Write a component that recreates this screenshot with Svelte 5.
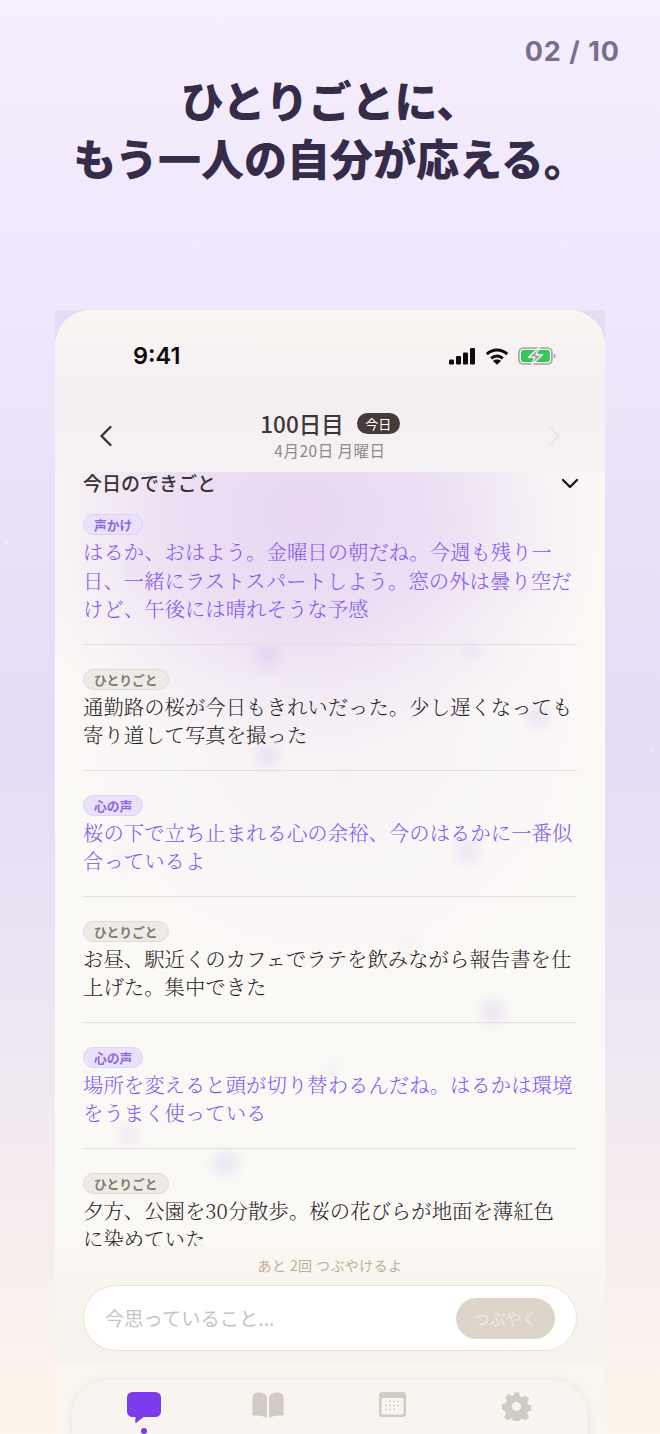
<script>
  const sparkles = [[222,18,3],[437,270,4],[431,258,3],[550,270,3],[3,540,5],[650,748,4],[645,140,3],[270,285,3],[195,243,3],[560,240,3]];
  const blots = [
    [200,172,24,.09],[200,272,24,.09],[470,232,24,.09],[400,367,24,.08],[425,527,26,.1],[157,678,26,.1],[62,652,24,.07],[58,378,20,.04],
    [405,168,20,.05],[270,590,18,.04],[345,462,16,.04],[70,90,16,.05],[460,110,16,.04],[285,300,14,.03]
  ];
  const entries = [
    { kind: 'voice', tag: '声かけ', text: 'はるか、おはよう。金曜日の朝だね。今週も残り一日、一緒にラストスパートしよう。窓の外は曇り空だけど、午後には晴れそうな予感' },
    { kind: 'self', tag: 'ひとりごと', text: '通勤路の桜が今日もきれいだった。少し遅くなっても寄り道して写真を撮った' },
    { kind: 'voice', tag: '心の声', text: '桜の下で立ち止まれる心の余裕、今のはるかに一番似合っているよ' },
    { kind: 'self', tag: 'ひとりごと', text: 'お昼、駅近くのカフェでラテを飲みながら報告書を仕上げた。集中できた' },
    { kind: 'voice', tag: '心の声', text: '場所を変えると頭が切り替わるんだね。はるかは環境をうまく使っている' },
    { kind: 'self', tag: 'ひとりごと', text: '夕方、公園を30分散歩。桜の花びらが地面を薄紅色に染めていた' }
  ];
</script>

<div class="page">
  {#each sparkles as s}
    <i class="sparkle" style="left:{s[0]}px;top:{s[1]}px;width:{s[2]}px;height:{s[2]}px"></i>
  {/each}
  <div class="counter">02 / 10</div>
  <h1>ひとりごとに、<br />もう一人の自分が応える。</h1>

  <div class="frame">
    <div class="phone">
      <div class="wash">
        {#each blots as b}
          <i class="blot" style="left:{b[0]}px;top:{b[1]}px;width:{b[2]}px;height:{b[2]}px;opacity:{b[3]}"></i>
        {/each}
      </div>

      <header>
        <div class="status">
          <span class="time">9:41</span>
          <div class="status-icons">
            <svg width="27" height="17" viewBox="0 0 27 17"><rect x="0" y="11.5" width="5" height="5" rx="1.2"/><rect x="7" y="8" width="5" height="8.5" rx="1.2"/><rect x="14" y="4.500" width="5" height="12" rx="1.200"/><rect x="21" y="0" width="5" height="16.500" rx="1.200"/></svg>
            <svg width="24" height="17" viewBox="0 0 24 17"><path d="M1.800 6.200C4.600 3.500 8.100 2 12 2s7.400 1.500 10.200 4.200" fill="none" stroke="#0d0b0b" stroke-width="3"/><path d="M6.200 10.400C7.800 8.900 9.800 8 12 8s4.200.9 5.800 2.400" fill="none" stroke="#0d0b0b" stroke-width="3"/><path d="M12 16.800 8 13c1.100-.9 2.500-1.400 4-1.400s2.900.5 4 1.400z"/></svg>
            <svg width="38" height="18" viewBox="0 0 38 18"><rect x=".9" y="1" width="33" height="16" rx="4.500" fill="none" stroke="#a5a1a0" stroke-width="1.600"/><rect x="3" y="3.100" width="28.800" height="11.800" rx="2.600" fill="#34c759"/><path d="M35.800 6.500c1.200.4 1.800 1.400 1.800 2.500s-.6 2.100-1.800 2.500z" fill="#a5a1a0"/><path d="M21.500 0 10.500 10.200h6.300L13.500 18l11-10.200h-6.300z" fill="#a5a1a0" stroke="#f4eff1" stroke-width="1.400" stroke-linejoin="round"/></svg>
          </div>
        </div>
        <div class="nav">
          <svg class="chev" width="14" height="22" viewBox="0 0 14 22"><path d="M11.500 2 2.500 11l9 9" fill="none" stroke="#3d3535" stroke-width="2.400" stroke-linecap="round" stroke-linejoin="round"/></svg>
          <div class="nav-center">
            <div class="nav-title"><span class="day">100日目</span><span class="today">今日</span></div>
            <div class="date">4月20日 月曜日</div>
          </div>
          <svg class="chev" width="14" height="22" viewBox="0 0 14 22"><path d="M2.500 2 11.500 11l-9 9" fill="none" stroke="#e9e4e5" stroke-width="2.400" stroke-linecap="round" stroke-linejoin="round"/></svg>
        </div>
      </header>

      <section class="list">
        <div class="section-head">
          <span>今日のできごと</span>
          <svg width="18" height="11" viewBox="0 0 18 11"><path d="M2 2l7 7 7-7" fill="none" stroke="#1a1616" stroke-width="2.300" stroke-linecap="round" stroke-linejoin="round"/></svg>
        </div>
        {#each entries as e}
          <article class={e.kind}>
            <span class="tag">{e.tag}</span>
            <p>{e.text}</p>
          </article>
        {/each}
      </section>

      <footer>
        <div class="remain">あと 2回 つぶやけるよ</div>
        <div class="input">
          <span class="placeholder">今思っていること...</span>
          <span class="send">つぶやく</span>
        </div>
        <nav>
          <div class="tab active">
            <svg width="34" height="32" viewBox="0 0 34 32"><path d="M5.500 0h23A5.500 5.500 0 0 1 34 5.500v14a5.500 5.500 0 0 1-5.500 5.500H16.500l-6.800 5.600c-.8.600-1.700.1-1.600-.9L8.700 25H5.500A5.500 5.500 0 0 1 0 19.500v-14A5.500 5.500 0 0 1 5.500 0z" fill="#7c3aed"/></svg>
            <i class="dot"></i>
          </div>
          <div class="tab">
            <svg width="32" height="26" viewBox="0 0 32 26"><path d="M15 4.500V26c-2.500-1.800-7-2.800-13-2.400-1 .1-1.600-.5-1.600-1.400V6C.4 2.500 3 .4 6.800.4 10.800.4 13.800 1.800 15 4.500zM17 4.500V26c2.500-1.800 7-2.800 13-2.400 1 .1 1.600-.5 1.600-1.400V6c0-3.500-2.600-5.600-6.400-5.600-4 0-7 1.400-8.200 4.100z" fill="#d2cbc4"/></svg>
          </div>
          <div class="tab">
            <svg width="27" height="25" viewBox="0 0 27 25"><rect width="27" height="25" rx="3" fill="#d2cbc4"/><rect x="2.500" y="6" width="22" height="16.500" rx="1.500" fill="#f8f5f0"/><g fill="#d2cbc4"><circle cx="11" cy="9.500" r="1"/><circle cx="15" cy="9.500" r="1"/><circle cx="19" cy="9.500" r="1"/><circle cx="7" cy="13.500" r="1"/><circle cx="11" cy="13.500" r="1"/><circle cx="15" cy="13.500" r="1"/><circle cx="19" cy="13.500" r="1"/><circle cx="7" cy="17.500" r="1"/><circle cx="11" cy="17.500" r="1"/><circle cx="15" cy="17.500" r="1"/></g></svg>
          </div>
          <div class="tab">
            <svg width="29" height="29" viewBox="0 0 29 29"><path fill="#d2cbc4" fill-rule="evenodd" d="M12 .5h5l.8 3.700c.9.300 1.700.7 2.500 1.200l3.300-2 3.500 3.500-2 3.300c.5.800.9 1.600 1.200 2.500l3.700.8v5l-3.700.8c-.3.900-.7 1.700-1.200 2.500l2 3.300-3.500 3.500-3.300-2c-.8.500-1.600.9-2.500 1.200l-.8 3.700h-5l-.8-3.700c-.9-.3-1.700-.7-2.500-1.200l-3.300 2-3.500-3.500 2-3.300c-.5-.8-.9-1.600-1.200-2.500L0 17v-5l3.700-.8c.3-.9.700-1.700 1.200-2.500l-2-3.300L6.400 1.900l3.300 2c.8-.5 1.600-.9 2.500-1.200zM14.500 10a4.500 4.500 0 1 0 0 9 4.500 4.500 0 0 0 0-9z"/></svg>
          </div>
        </nav>
      </footer>
    </div>
  </div>
</div>

<style>
  :global(body) { margin: 0; }
  .page {
    position: relative;
    width: 660px;
    height: 1434px;
    overflow: hidden;
    display: flex;
    flex-direction: column;
    font-family: "Noto Sans CJK JP", "Noto Sans", sans-serif;
    background: linear-gradient(180deg, #f5eefd 0, #efe7fb 300px, #e5dbf5 740px, #efe7f2 1050px, #fdf5e9 1434px);
  }
  .sparkle { position: absolute; border-radius: 50%; background: rgba(255,255,255,.3); }
  .counter {
    padding: 33px 40px 0 0;
    height: 37px;
    text-align: right;
    font: 700 27px/37px Inter, sans-serif;
    letter-spacing: 1px;
    color: #7a6e8e;
  }
  h1 {
    margin: 0;
    text-align: center;
    font-size: 43px;
    line-height: 58px;
    font-weight: 900;
    color: #352c4a;
  }
  .frame {
    margin: 124px 55px 0;
    height: 1124px;
    background: rgba(110, 90, 150, .07);
  }
  .phone {
    position: relative;
    height: 100%;
    overflow: hidden;
    display: flex;
    flex-direction: column;
    border-radius: 36px 36px 0 0;
    background: #fbf9f6;
  }
  .wash {
    position: absolute;
    inset: 162px 0 188px;
    overflow: hidden;
    background:
      radial-gradient(ellipse 310px 250px at 250px 40px, #e7d7f2 0, rgba(231,215,242,.72) 45%, rgba(231,215,242,.25) 75%, rgba(231,215,242,0) 100%),
      radial-gradient(ellipse 300px 300px at 275px 240px, rgba(238,228,245,.35), rgba(238,228,245,0) 100%);
  }
  .blot { position: absolute; border-radius: 50%; background: #6a4fe0; filter: blur(6px); }
  header {
    position: relative;
    height: 162px;
    flex: none;
    box-sizing: border-box;
    background: linear-gradient(180deg, #faf6f2 0, #f3eef2 55%, #f7f2f3 100%);
  }
  .status {
    display: flex;
    justify-content: space-between;
    align-items: center;
    padding: 32px 49px 0 78px;
    height: 28px;
  }
  .time { font: 600 23.500px/28px Inter, sans-serif; color: #0d0b0b; }
  .status-icons { display: flex; align-items: center; gap: 9px; }
  .status-icons svg { display: block; fill: #0d0b0b; }
  .nav {
    display: flex;
    justify-content: space-between;
    align-items: center;
    padding: 0 44px;
    margin-top: 37px;
  }
  .chev { margin-top: 4px; }
  .nav-center { display: flex; flex-direction: column; align-items: center; }
  .nav-title { display: flex; align-items: center; gap: 13px; height: 32px; }
  .day { font-size: 22.500px; font-weight: 500; color: #3f3636; line-height: 32px; }
  .today {
    height: 21px;
    width: 43px;
    border-radius: 11px;
    background: #463a3a;
    color: #fff;
    font-size: 13px;
    line-height: 21px;
    text-align: center;
  }
  .date { font-size: 15.500px; line-height: 20px; margin-top: 1px; letter-spacing: .5px; color: #92888a; }
  .list {
    position: relative;
    flex: 1;
    min-height: 0;
    overflow: hidden;
    padding: 0 28px;
  }
  .section-head {
    display: flex;
    justify-content: space-between;
    align-items: center;
    height: 21px;
    font-size: 19px;
    line-height: 21px;
    font-weight: 500;
    color: #3a3232;
    padding-bottom: 21px;
  }
  .section-head svg { margin: 2px -2px 0 0; }
  article { border-bottom: 1px solid #e2dfdd; padding-bottom: 20px; margin-bottom: 24px; }
  article:last-child { border: 0; }
  .tag {
    display: block;
    width: fit-content;
    box-sizing: border-box;
    height: 21px;
    padding: 0 10px;
    border-radius: 11px;
    font-size: 12.800px;
    font-weight: 700;
    line-height: 19px;
    border: 1px solid;
  }
  .voice .tag { background: #ebe1fa; border-color: #ddd1f6; color: #8a68e2; }
  .self .tag { background: #eeeae5; border-color: #dedad4; color: #857a6e; }
  p {
    margin: 3px 0 0;
    max-width: 491px;
    font-family: "Noto Serif CJK JP", "Noto Sans CJK JP", sans-serif;
    font-size: 20.400px;
    line-height: 28.500px;
    font-weight: 300;
  }
  .voice p { color: #8557f0; }
  .self p { color: #2a2625; }
  footer {
    position: relative;
    height: 188px;
    flex: none;
    box-sizing: border-box;
    padding-top: 10px;
    background: linear-gradient(180deg, #faf7f2 0, #f5f1ec 60%, #f9f5ef 63%, #f9f6f1 100%);
  }
  .remain { text-align: center; font-size: 14px; letter-spacing: .4px; line-height: 19px; color: #bfae97; }
  .input {
    margin: 10px 28px 0;
    height: 66px;
    box-sizing: border-box;
    border: 1px solid #ede4d6;
    border-radius: 33px;
    background: #fff;
    display: flex;
    align-items: center;
    justify-content: space-between;
    padding: 0 21px;
  }
  .placeholder { font-size: 19.300px; color: #c6c4c2; }
  .send {
    width: 99px;
    height: 41px;
    border-radius: 21px;
    background: #ddd5ca;
    color: #efeae3;
    text-align: center;
    font-size: 16px;
    line-height: 41px;
  }
  nav {
    margin: 29px 17px 0;
    height: 90px;
    border-radius: 36px;
    background: #f8f5f0;
    box-shadow: 0 1px 8px rgba(120, 100, 80, .12);
    display: grid;
    grid-template-columns: repeat(4, 124px);
    justify-content: center;
  }
  .tab { position: relative; display: flex; flex-direction: column; align-items: center; padding-top: 12px; }
  .tab svg { display: block; }
  .dot { width: 6px; height: 6px; margin-top: 4px; border-radius: 50%; background: #7c3aed; }
</style>
